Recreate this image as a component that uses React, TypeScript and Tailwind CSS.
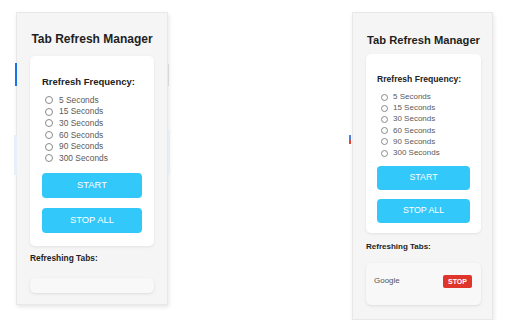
import React from 'react';

type Size = 'lg' | 'sm';

const options = ['5 Seconds', '15 Seconds', '30 Seconds', '60 Seconds', '90 Seconds', '300 Seconds'];

const styles = {
  lg: {
    panel: 'w-[152px] h-[293px] pt-[19px] px-[13px]',
    title: 'text-[12px] leading-[15px] mb-[9px]',
    card: 'px-[12px] pt-[20px] pb-[13px]',
    heading: 'text-[9.5px] leading-[12px] mb-[6px]',
    row: 'h-[11.7px] text-[8.4px]',
    radio: 'w-[8px] h-[8px] ml-[3px] mr-[6px]',
    btnWrap: 'mt-[8.6px] gap-[10px]',
    btn: 'h-[25px] text-[9.4px]',
    tabs: 'text-[8.4px] leading-[11px] mt-[7.5px]',
  },
  sm: {
    panel: 'w-[141px] h-[308px] pt-[20px] pl-[13px] pr-[11px]',
    title: 'text-[11.2px] leading-[14px] mb-[7px]',
    card: 'px-[11px] pt-[19.5px] pb-[10px]',
    heading: 'text-[8.6px] leading-[11px] mb-[7px]',
    row: 'h-[11.2px] text-[8px]',
    radio: 'w-[7px] h-[7px] ml-[4px] mr-[5px]',
    btnWrap: 'mt-[7.4px] gap-[9px]',
    btn: 'h-[24px] text-[8.8px]',
    tabs: 'text-[8px] leading-[10px] mt-[9px]',
  },
};

function Panel({ size, tabs }: { size: Size; tabs: string[] }) {
  const s = styles[size];
  return (
    <div className={`flex flex-col shrink-0 bg-[#f5f5f5] border border-[#e8e8e8] shadow-[1px_2px_4px_rgba(0,0,0,0.1)] ${s.panel}`}>
      <h1 className={`font-bold text-[#1e1e1e] text-center whitespace-nowrap -mx-[6px] ${s.title}`}>Tab Refresh Manager</h1>

      <div className={`bg-white rounded-[5px] shadow-[0_1px_3px_rgba(0,0,0,0.08)] flex flex-col ${s.card}`}>
        <h2 className={`font-bold text-[#222] whitespace-nowrap ${s.heading}`}>Rrefresh Frequency:</h2>
        <div className="flex flex-col">
          {options.map((o) => (
            <label key={o} className={`flex items-center text-[#5a5a5a] ${s.row}`}>
              <span className={`rounded-full border border-[#8a8a8a] bg-white shrink-0 ${s.radio}`} />
              {o}
            </label>
          ))}
        </div>
        <div className={`flex flex-col ${s.btnWrap}`}>
          <button className={`w-full rounded-[4px] bg-[#33c8fa] text-white ${s.btn}`}>START</button>
          <button className={`w-full rounded-[4px] bg-[#33c8fa] text-white ${s.btn}`}>STOP ALL</button>
        </div>
      </div>

      <h3 className={`font-bold text-[#1e1e1e] whitespace-nowrap ${s.tabs}`}>Refreshing Tabs:</h3>

      {tabs.length === 0 ? (
        <div className="mt-[13.5px] h-[15px] rounded-[5px] bg-[#f8f8f8] shadow-[0_1px_3px_rgba(0,0,0,0.1)]" />
      ) : (
        <div className="mt-[11px] h-[42px] rounded-[5px] bg-[#f8f8f8] shadow-[0_1px_3px_rgba(0,0,0,0.1)] pt-[11.5px] pl-[8px] pr-[9px]">
          {tabs.map((t) => (
            <div key={t} className="flex items-center justify-between h-[13px]">
              <span className="text-[8px] text-[#555]">{t}</span>
              <button className="w-[29px] h-[13px] rounded-[2px] bg-[#e0352b] text-white text-[7px] font-semibold leading-[13px]">
                STOP
              </button>
            </div>
          ))}
        </div>
      )}
    </div>
  );
}

export default function App() {
  return (
    <div className="relative w-[512px] h-[320px] overflow-hidden bg-white font-['Liberation_Sans',Arial,sans-serif]">
      {/* bits of the page behind the popups */}
      <div className="absolute left-[15px] top-[63px] w-[2px] h-[23px] bg-[#1a73e8]" />
      <div className="absolute left-[14px] top-[135px] w-[3px] h-[40px] bg-[#e6f0fb]" />
      <div className="absolute left-[168px] top-[130px] w-[2px] h-[45px] bg-[#e3eef9]" />
      <div className="absolute left-[168px] top-[64px] w-[1px] h-[22px] bg-[#d8d8d8]" />
      <div className="absolute left-[349px] top-[135px] w-[2px] h-[8px] bg-[#4f7fd8]" />
      <div className="absolute left-[349px] top-[140px] w-[2px] h-[4px] bg-[#e0453a]" />

      <div className="flex items-start pt-[12px] pl-[16px]">
        <Panel size="lg" tabs={[]} />
        <div className="w-[184px] shrink-0" />
        <Panel size="sm" tabs={['Google']} />
      </div>
    </div>
  );
}
